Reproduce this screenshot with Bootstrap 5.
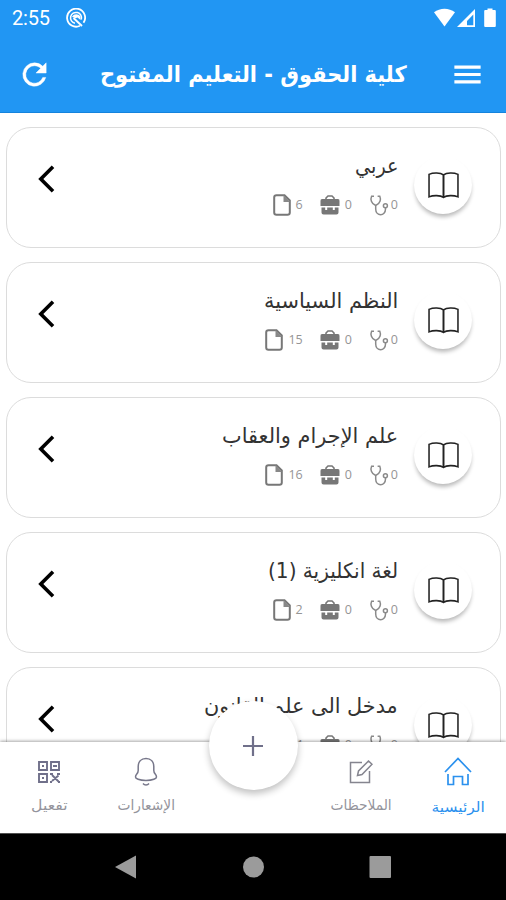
<!DOCTYPE html>
<html lang="ar" dir="rtl">
<head>
<meta charset="utf-8">
<meta name="viewport" content="width=device-width, initial-scale=1">
<title>كلية الحقوق - التعليم المفتوح</title>
<link href="https://cdn.jsdelivr.net/npm/bootstrap@5.3.0/dist/css/bootstrap.min.css" rel="stylesheet">
<style>
body{font-family:"DejaVu Sans",sans-serif;background:#fff;color:#222}
svg{display:block;flex:none}
.screen{height:900px;width:506px}
.top-area{background:#2196f3;height:113px;border-bottom:1px solid #1583dd}
.status{height:36px;padding:0 10px 0 12px;direction:ltr}
.clock{font:400 20px/36px Roboto,sans-serif;letter-spacing:-.2px}
.appbar{height:76px;padding:0 21px 0 17px}
.title-slot{padding-right:43px}
.app-title{font-size:22.5px;font-weight:700;line-height:32px}
.fit{display:inline-block;white-space:nowrap;transform-origin:100% 50%}
.subjects{padding:14px 5px 0 6px;gap:14px}
.subject{height:121px;flex:none;border:1.5px solid #dcdcdc;border-radius:25px;padding:0 28px 0 31px;background:#fff}
.book{width:58px;height:58px;margin-top:28px;box-shadow:0 4px 4px -1px rgba(0,0,0,.28)}
.info{margin-top:22px;gap:8px}
.subject-title{font-size:21px;line-height:32px;height:32px;color:#333}
.stats{gap:17px;height:30px;font:400 12.5px/30px "Open Sans",sans-serif;color:#959595}
.stat{gap:5px}
.stat-tight{gap:2px}
.chev{margin-top:37px}
.bottom-nav{height:91px;background:#fff;box-shadow:0 -1px 3px rgba(0,0,0,.35);z-index:2}
.side-item{width:97.25px;color:#85858f;padding:13px 0 0 1px}
.side-item .fit{transform-origin:50% 50%}
.side-item .ico{height:34px}
.nav-label{font-size:14px;line-height:32px;color:#94949c}
.side-item.current,.side-item.current .nav-label{color:#2b91ee}
.side-item.current .nav-label{padding-top:2px}
.fab{width:89px;height:89px;margin-top:-41px;box-shadow:0 4px 7px rgba(0,0,0,.24)}
.system{height:67px;background:#000;border-top:1px solid #555;direction:ltr;padding:0 114px}
</style>
<script src="https://cdn.jsdelivr.net/npm/bootstrap@5.3.0/dist/js/bootstrap.bundle.min.js"></script>
</head>
<body>
<svg width="0" height="0" class="position-absolute">
  <symbol id="i-book" viewBox="0 0 30 26"><path d="M15 2.800C12 .3 5 .3 1 2.200V24c4-1.700 11-1.700 14 .6 3-2.300 10-2.300 14-.6V2.200C25 .3 18 .3 15 2.800zV24.600" fill="none" stroke="#222" stroke-width="1.500"/><path d="M15 2.800V24.600" stroke="#222" stroke-width="1.500"/></symbol>
  <symbol id="i-steth" viewBox="0 0 20 21"><path d="M5 1.200H2.600C1.300 4 2 8.500 6.700 10.500 11.400 8.500 12.100 4 10.800 1.200H8.600M6.700 10.500V14c0 7.500 9.800 7.500 9.800 0v-1.200" fill="none" stroke="#8a8a8a" stroke-width="1.500"/><circle cx="16.400" cy="10.700" r="2" fill="none" stroke="#8a8a8a" stroke-width="1.500"/></symbol>
  <symbol id="i-case" viewBox="0 0 20 20"><path d="M6 4.500V3l2-2h4l2 2v1.500" fill="none" stroke="#777" stroke-width="1.600"/><path d="M2.500 4h15A1.800 1.800 0 0 1 19.500 6v5H.5V6a1.800 1.800 0 0 1 2-2zM1.500 12.500h3.700v2.500h2v-2.500h5.600v2.500h2v-2.500h3.700v5a2 2 0 0 1-2 2h-13a2 2 0 0 1-2-2z" fill="#777"/></symbol>
  <symbol id="i-file" viewBox="0 0 18 22"><path d="M3.500 1.200h8L16.800 6.500V18.500a2.300 2.300 0 0 1-2.300 2.300h-11A2.300 2.300 0 0 1 1.200 18.500v-15A2.300 2.300 0 0 1 3.500 1.200z" fill="none" stroke="#777" stroke-width="2"/><path d="M10.500 1v7H17z" fill="#888"/></symbol>
  <symbol id="i-chev" viewBox="0 0 17 28"><path d="M15 1.800 2.800 14 15 26.200" fill="none" stroke="#000" stroke-width="3.600"/></symbol>
</svg>
<div class="screen d-flex flex-column overflow-hidden">
  <header class="top-area text-white flex-shrink-0">
    <div class="status d-flex align-items-center">
      <span class="clock">2:55</span>
      <svg class="ms-3" width="20" height="20" viewBox="0 0 20 20" fill="none" stroke="#fff"><path d="M14 17.800A9 9 0 1 1 17.500 14.800" stroke-width="1.800"/><path d="M9 15.300A5.500 5.500 0 1 1 15.300 11.500" stroke-width="1.500"/><path d="M6 8.800C8 5.500 12 5.500 14.500 8.500V12l-3-2.600-2 .9z" fill="#fff" stroke="none"/><path d="M7.500 10l8.500 8" stroke-width="1.800"/></svg>
      <svg class="ms-auto" width="62" height="20" viewBox="0 0 62 20" fill="#fff"><path d="M0 4.300C6-.6 15-.6 21 4.300L10.500 18.500z"/><path fill-rule="evenodd" d="M41 1v18H23zM39.300 6.500 33 13v4.300h6.300z"/><path d="M53.500 2V.5h5V2h2.300a1 1 0 0 1 1 1v15a1 1 0 0 1-1 1h-9.600a1 1 0 0 1-1-1V3a1 1 0 0 1 1-1z"/></svg>
    </div>
    <div class="appbar d-flex align-items-center">
      <svg width="35" height="35" viewBox="0 0 24 24" fill="#fff"><path d="M3 18.100h18v-2.200H3zm0-5h18v-2.200H3zm0-7.200v2.200h18V5.900z"/></svg>
      <div class="title-slot flex-grow-1"><div class="app-title fit" data-width="307">كلية الحقوق - التعليم المفتوح</div></div>
      <svg width="35" height="35" viewBox="0 0 24 24" fill="#fff" stroke="#fff" stroke-width=".3"><path d="M17.650 6.350A7.960 7.960 0 0 0 12 4a8 8 0 1 0 7.730 10h-2.080A6 6 0 1 1 12 6c1.660 0 3.140.69 4.220 1.780L13 11h7V4z"/></svg>
    </div>
  </header>

  <main class="subjects d-flex flex-column flex-grow-1 overflow-hidden" id="subjects"></main>

  <nav class="bottom-nav d-flex flex-shrink-0 position-relative">
    <div class="side-item current d-flex flex-column align-items-center">
      <div class="ico d-flex align-items-center"><svg width="28" height="30" viewBox="0 0 28 30" fill="none" stroke="currentColor" stroke-width="1.700"><path d="M1 15 14 1.500 27 15M4 17v10.500h5.500v-8h9v8H24V17"/></svg></div>
      <div class="nav-label"><span class="fit" data-width="53">الرئيسية</span></div>
    </div>
    <div class="side-item d-flex flex-column align-items-center">
      <div class="ico d-flex align-items-center"><svg width="25" height="25" viewBox="0 0 25 25" fill="none" stroke="currentColor" stroke-width="1.500"><path d="M14 2.500H2.500V22.500H21.500V11M9.500 15.500l1-4.500L20.500 1 24 4.300 14 14.500z"/></svg></div>
      <div class="nav-label"><span class="fit" data-width="61">الملاحظات</span></div>
    </div>
    <div class="flex-grow-1 d-flex justify-content-center">
      <div class="fab rounded-circle bg-white d-flex align-items-center justify-content-center"><svg width="20" height="20" viewBox="0 0 20 20" stroke="#70708a" stroke-width="2.200"><path d="M10 0v20M0 10h20"/></svg></div>
    </div>
    <div class="side-item d-flex flex-column align-items-center">
      <div class="ico d-flex align-items-center"><svg width="24" height="30" viewBox="0 0 24 30" fill="none" stroke="#77778a" stroke-width="1.500"><path d="M12 1.500C7 1.500 4.200 5 4.200 9.500v4C4.200 17 1.500 17 1.500 20c0 1.500 3.500 3.500 10.500 3.500s10.500-2 10.500-3.500c0-3-2.700-3-2.700-6.500v-4c0-4.500-2.800-8-7.800-8zM9 26.500c1.500 2 4.500 2 6 0"/></svg></div>
      <div class="nav-label"><span class="fit" data-width="57">الإشعارات</span></div>
    </div>
    <div class="side-item d-flex flex-column align-items-center">
      <div class="ico d-flex align-items-center"><svg width="22" height="22" viewBox="0 0 22 22" fill="none" stroke="#70708a" stroke-width="1.900"><path d="M1 1h8v8H1zM13 1h8v8h-8zM1 13h8v8H1zM4 5h2M15 5h4M4 17h2M12 13h3M19 13h3M14 14l6.500 6.500M20.500 14.500 14 20M12 21h2M20 21h2"/></svg></div>
      <div class="nav-label"><span class="fit" data-width="37">تفعيل</span></div>
    </div>
  </nav>

  <footer class="system d-flex flex-shrink-0 align-items-center justify-content-between">
    <svg width="24" height="24" viewBox="0 0 24 24" fill="#9b9b9b"><path d="M1 12 22 .5v23z"/></svg>
    <svg width="24" height="24" viewBox="0 0 24 24" fill="#9b9b9b"><circle cx="12.500" cy="12" r="10.500"/></svg>
    <svg width="24" height="24" viewBox="0 0 24 24" fill="#9b9b9b"><rect x="1.500" y="1" width="21.500" height="22" rx="1"/></svg>
  </footer>
</div>
<script>
const subjects = [
  ["عربي", 43, 6],
  ["النظم السياسية", 134, 15],
  ["علم الإجرام والعقاب", 176, 16],
  ["لغة انكليزية (1)", 130, 2],
  ["مدخل الى علم القانون", 194, 4]
];
document.getElementById("subjects").innerHTML = subjects.map(([name, width, files]) => `
  <article class="subject d-flex align-items-start">
    <div class="book rounded-circle bg-white d-flex align-items-center justify-content-center flex-shrink-0"><svg width="31" height="27"><use href="#i-book"/></svg></div>
    <div class="info d-flex flex-column pe-3 flex-grow-1">
      <div class="subject-title"><span class="fit" data-width="${width}">${name}</span></div>
      <div class="stats d-flex align-items-center">
        <span class="stat-tight d-flex align-items-center">0<svg width="20" height="21"><use href="#i-steth"/></svg></span>
        <span class="stat d-flex align-items-center">0<svg width="20" height="20"><use href="#i-case"/></svg></span>
        <span class="stat d-flex align-items-center">${files}<svg width="18" height="22"><use href="#i-file"/></svg></span>
      </div>
    </div>
    <svg class="chev" width="17" height="28"><use href="#i-chev"/></svg>
  </article>`).join("");
document.querySelectorAll(".fit").forEach(el => {
  el.style.transform = `scaleX(${el.dataset.width / el.offsetWidth})`;
});
</script>
</body>
</html>
